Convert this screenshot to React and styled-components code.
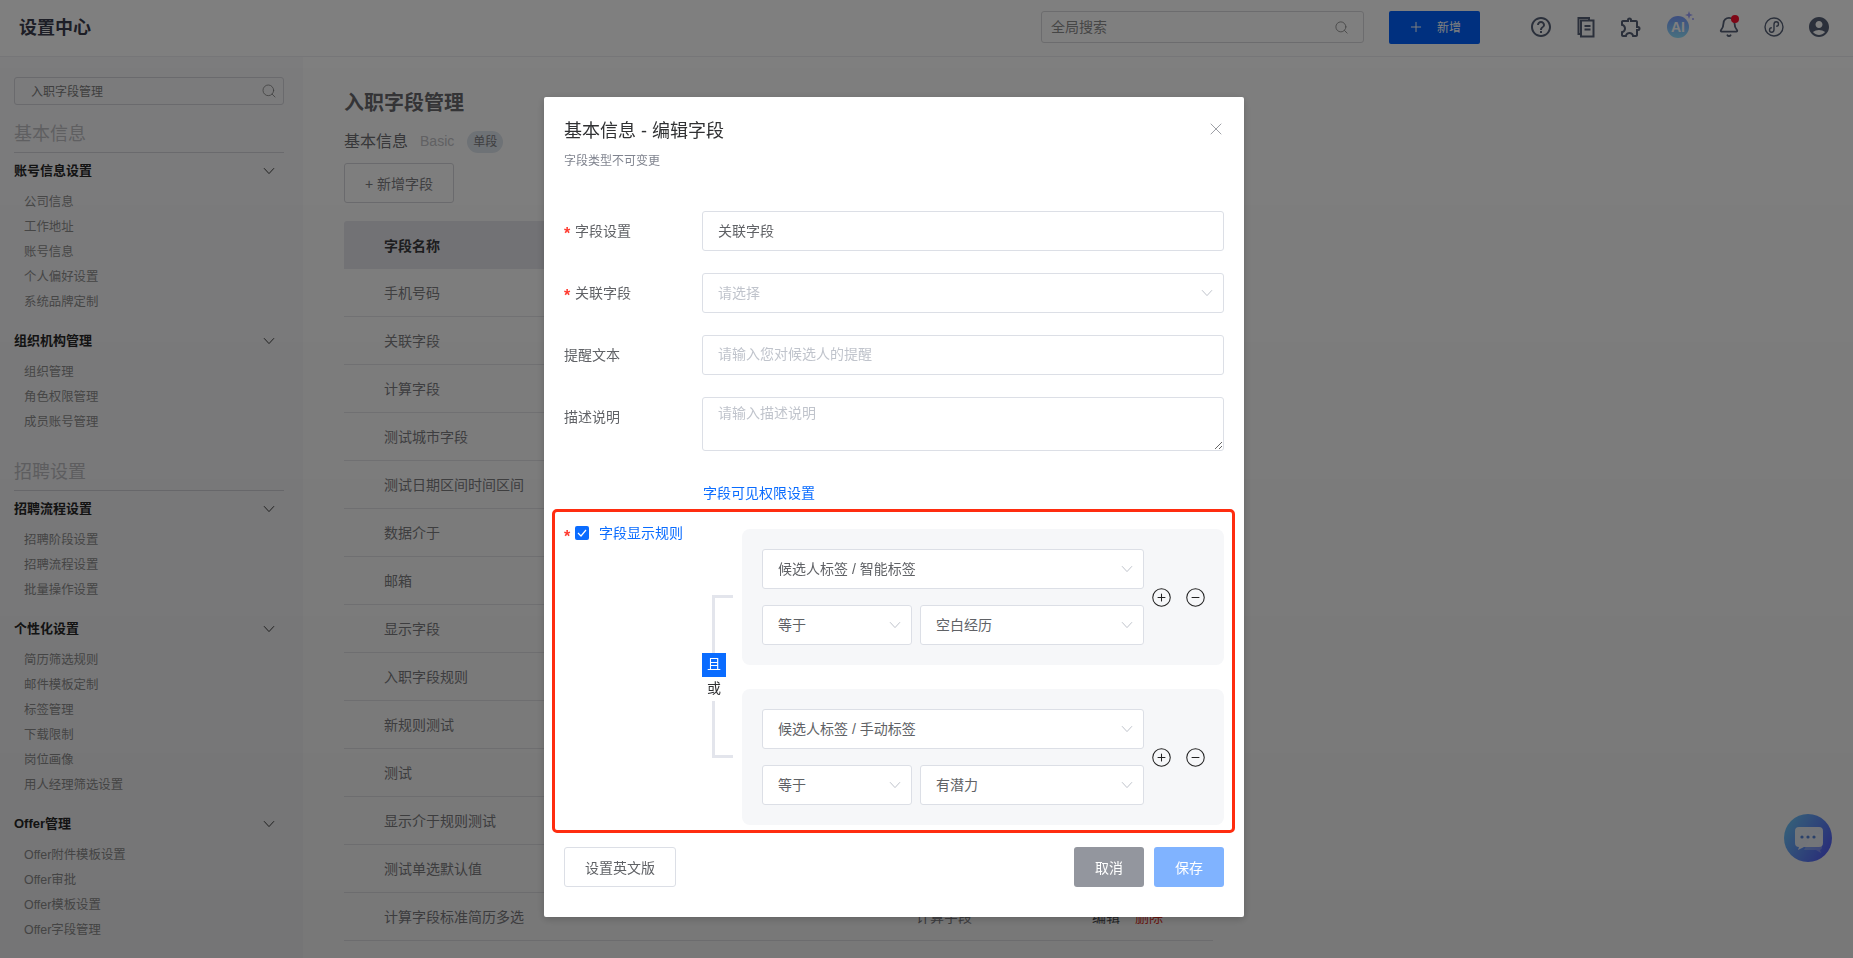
import styled, { createGlobalStyle } from "styled-components";
import { Bell, CircleMinus, CirclePlus, Search, X, Plus } from "lucide-react";
import { MdAccountCircle, MdHelpOutline, MdOutlineExtension } from "react-icons/md";

const GlobalStyle = createGlobalStyle`
    html, body {
        margin: 0;
        height: 100%;
        overflow: hidden;
    }
    * {
        box-sizing: border-box;
    }
    body, input, textarea, button {
        font-family: "Liberation Sans", "Noto Sans CJK SC", sans-serif;
    }
`

const Page = styled.div`
    display: flex;
    flex-direction: column;
    height: 100vh;
    background: #fff;
`

const TopBar = styled.header`
    display: flex;
    align-items: center;
    height: 57px;
    flex-shrink: 0;
    padding: 0 22px 2px 19px;
    border-bottom: 1px solid #ececf0;
`

const Logo = styled.div`
    flex: 1;
    padding-bottom: 3px;
    font-size: 18px;
    font-weight: 700;
    color: #3a3c4c;
`

const GlobalSearch = styled.div`
    display: flex;
    align-items: center;
    justify-content: space-between;
    width: 323px;
    height: 32px;
    padding: 0 14px 3px 9px;
    border: 1px solid #d8d8dc;
    border-radius: 3px;
    font-size: 14px;
    color: #8c8c8c;

    svg {
        margin-top: 3px;
    }
`

const NewButton = styled.button`
    display: flex;
    align-items: center;
    width: 91px;
    height: 33px;
    margin: 0 49px 0 25px;
    padding: 0 0 2px 19px;
    gap: 13px;
    border: 0;
    border-radius: 2px;
    background: #0061ff;
    color: #fff;
    font-size: 12px;

    svg {
        margin-top: 2px;
    }
`

const IconBar = styled.div`
    display: flex;
    align-items: center;
    gap: 21px;
    color: #566076;
`

const IconSlot = styled.div`
    position: relative;
    display: flex;
    align-items: center;
    justify-content: center;
    width: 24px;
    height: 24px;
    margin: 0 ${p => p.$right || 0}px 0 ${p => p.$left || 0}px;

    svg {
        flex-shrink: 0;
    }
`

const RedDot = styled.span`
    position: absolute;
    top: 0;
    right: 2px;
    width: 8px;
    height: 8px;
    border-radius: 50%;
    background: #ff0f2e;
`

const Body = styled.div`
    display: flex;
    flex: 1;
    min-height: 0;
`

const Sidebar = styled.aside`
    width: 303px;
    flex-shrink: 0;
    padding: 20px 19px 0 14px;
    background: #f9f9fb;
`

const SideSearch = styled.div`
    display: flex;
    align-items: center;
    justify-content: space-between;
    height: 28px;
    padding: 0 6px 2px 16px;
    border: 1px solid #d6d6dc;
    border-radius: 3px;
    font-size: 12px;
    color: #808080;

    svg {
        margin-top: 2px;
    }
`

const SectionTitle = styled.h4`
    margin: ${p => p.$first ? "15px" : "23px"} 0 0;
    height: 33px;
    padding: 1px 0 6px;
    border-bottom: 1px solid #d6d6dc;
    font-size: 18px;
    line-height: 26px;
    font-weight: 400;
    color: #c0c0c4;
`

const MenuGroup = styled.div`
    margin-top: ${p => p.$first ? "7px" : "15px"};
`

const MenuTitle = styled.div`
    display: flex;
    align-items: center;
    justify-content: space-between;
    height: 20px;
    padding: 0 9px 2px 0;
    margin-bottom: 10px;
    font-size: 13px;
    font-weight: 700;
    color: #282828;

    svg {
        margin-top: 4px;
    }
`

const MenuItem = styled.div`
    height: 25px;
    line-height: 25px;
    padding-left: 10px;
    font-size: 12.4px;
    color: #909090;
`

const Main = styled.main`
    flex: 1;
    padding: 32px 640px 0 41px;
`

const PageTitle = styled.h2`
    margin: 0;
    font-size: 20px;
    line-height: 28px;
    font-weight: 700;
    color: #6a6a6e;
`

const SubTitleRow = styled.div`
    display: flex;
    align-items: center;
    height: 22px;
    margin-top: 14px;
`

const SubTitle = styled.span`
    font-size: 16px;
    margin-top: -5px;
    color: #707074;
`

const SubLatin = styled.span`
    margin: -2px 0 0 12px;
    font-size: 14px;
    color: #c4c4c8;
`

const Tag = styled.span`
    margin-left: 13px;
    padding: 0 6px;
    height: 22px;
    line-height: 22px;
    border-radius: 11px;
    background: #dfe6ee;
    font-size: 12px;
    color: #808084;
`

const AddFieldButton = styled.button`
    display: block;
    width: 110px;
    height: 40px;
    margin-top: 10px;
    border: 1px solid #d6d6dc;
    border-radius: 3px;
    background: transparent;
    font-size: 14px;
    color: #808084;
`

const Table = styled.div`
    margin-top: 18px;
`

const TableHead = styled.div`
    height: 48px;
    line-height: 50px;
    padding-left: 40px;
    background: #e8e8ee;
    border-radius: 3px 3px 0 0;
    font-size: 14px;
    font-weight: 700;
    color: #3c3c40;
`

const TableRow = styled.div`
    display: grid;
    grid-template-columns: 572px 176px 1fr;
    height: 48px;
    line-height: 49px;
    border-bottom: 1px solid #e6e6ea;
    font-size: 14px;
    color: #808084;
`

const NameCell = styled.div`
    padding-left: 40px;
`

const ActionCell = styled.div`
    display: flex;
    gap: 15px;
    color: #4c4c50;
`

const DeleteLink = styled.span`
    color: #e0301e;
`

const ChatBubble = styled.div`
    position: absolute;
    top: 814px;
    right: 21px;
    width: 48px;
    height: 48px;
    border-radius: 50%;
    background: linear-gradient(120deg, #74d6ff, #5454ff);
`

const Overlay = styled.div`
    position: fixed;
    inset: 0;
    background: linear-gradient(rgba(0, 0, 0, 0.5), rgba(0, 0, 0, 0.53));
`

const Modal = styled.div`
    position: absolute;
    top: 97px;
    left: 544px;
    width: 700px;
    height: 820px;
    padding: 20px 20px 0;
    background: #fff;
    border-radius: 2px;
    box-shadow: 0 2px 8px rgba(0, 0, 0, 0.2);
`

const ModalHead = styled.div`
    display: flex;
    align-items: center;
    justify-content: space-between;
    height: 24px;
    color: #8a8d94;

    svg {
        margin-right: -2px;
    }
`

const ModalTitle = styled.h3`
    margin: 0;
    font-size: 18px;
    font-weight: 400;
    color: #303133;
`

const ModalHint = styled.div`
    margin: 12px 0 42px;
    font-size: 12px;
    line-height: 16px;
    color: #80848f;
`

const FormRow = styled.div`
    display: flex;
    margin-bottom: ${p => p.$last ? 0 : 22}px;
`

const FormLabel = styled.label`
    display: flex;
    align-items: center;
    align-self: ${p => p.$top ? "flex-start" : "center"};
    width: 138px;
    flex-shrink: 0;
    height: 40px;
    padding-bottom: 2px;
    font-size: 14px;
    color: #606266;
`

const Star = styled.span`
    width: 11px;
    height: 14px;
    flex-shrink: 0;
    padding-top: 2px;
    color: #ff3b30;
    font-size: 16px;
    line-height: 18px;
    font-weight: 700;
`

const TextInput = styled.input`
    flex: 1;
    height: 40px;
    padding: 0 15px 2px;
    border: 1px solid #dcdfe6;
    border-radius: 3px;
    outline: 0;
    font-size: 14px;
    color: #606266;

    &::placeholder {
        color: #c0c4cc;
    }
`

const TextArea = styled.textarea`
    display: block;
    flex: 1;
    height: 54px;
    padding: 5px 15px;
    border: 1px solid #dcdfe6;
    border-radius: 3px;
    outline: 0;
    font-size: 14px;
    line-height: 20px;
    color: #606266;

    &::placeholder {
        color: #c0c4cc;
    }
`

const VisibilityLink = styled.div`
    margin: 32px 0 6px 139px;
    font-size: 14px;
    line-height: 20px;
    color: #0a6cff;
`

const RuleBox = styled.section`
    display: flex;
    height: 324px;
    margin: 0 -11px 14px -12px;
    padding: 14px 8px 0 9px;
    border: 3px solid #ff2d10;
    border-radius: 5px;
`

const RuleLabel = styled.div`
    display: flex;
    align-items: center;
    width: 138px;
    flex-shrink: 0;
    height: 14px;
    font-size: 14px;
    color: #0a6cff;
`

const RuleText = styled.span`
    margin-top: -2px;
`

const CheckBox = styled.span`
    display: flex;
    align-items: center;
    justify-content: center;
    width: 14px;
    height: 14px;
    margin-right: 10px;
    border-radius: 2px;
    background: #0a6cff;
`

const Connector = styled.div`
    display: flex;
    flex-direction: column;
    align-items: flex-start;
    width: 32px;
    height: 296px;
    margin: 3px 8px 0 0;
    padding-top: 66px;
`

const Bracket = styled.div`
    width: 21px;
    height: ${p => p.$height}px;
    margin-left: 10px;
    border-left: 3px solid #e3e5ec;
    border-top: ${p => p.$side === "top" ? "3px solid #e3e5ec" : "0"};
    border-bottom: ${p => p.$side === "bottom" ? "3px solid #e3e5ec" : "0"};
`

const ToggleOption = styled.div`
    width: 24px;
    height: 24px;
    line-height: 23px;
    text-align: center;
    font-size: 14px;
    background: ${p => p.$active ? "#0a6cff" : "transparent"};
    color: ${p => p.$active ? "#fff" : "#303133"};
`

const Groups = styled.div`
    display: flex;
    flex-direction: column;
    gap: 24px;
    width: 482px;
    margin-top: 3px;
`

const ConditionCard = styled.div`
    display: flex;
    align-items: center;
    height: 136px;
    padding-left: 20px;
    border-radius: 8px;
    background: #f6f7f9;
`

const ConditionFields = styled.div`
    display: flex;
    flex-direction: column;
    gap: 16px;
    flex: 0 0 382px;
`

const FieldLine = styled.div`
    display: flex;
    gap: 8px;
`

const SelectBox = styled.div`
    display: flex;
    align-items: center;
    justify-content: space-between;
    flex: ${p => p.$width ? `0 0 ${p.$width}px` : 1};
    height: 40px;
    padding: 0 10px 2px 15px;
    border: 1px solid #dcdfe6;
    border-radius: 3px;
    background: #fff;
    font-size: 14px;
    color: ${p => p.$placeholder ? "#c0c4cc" : "#606266"};

    svg {
        margin-top: 2px;
    }
`

const CardActions = styled.div`
    display: flex;
    gap: 13px;
    margin-left: 7px;
    color: #222;
`

const ModalFooter = styled.div`
    display: flex;
    justify-content: space-between;
`

const FooterRight = styled.div`
    display: flex;
    gap: 10px;
`

const GhostButton = styled.button`
    width: 112px;
    height: 40px;
    padding-bottom: 2px;
    border: 1px solid #dcdfe6;
    border-radius: 3px;
    background: #fff;
    font-size: 14px;
    color: #606266;
`

const FilledButton = styled.button`
    width: 70px;
    height: 40px;
    padding-bottom: 2px;
    border: 0;
    border-radius: 3px;
    background: ${p => p.$color};
    font-size: 14px;
    color: #fff;
`

function Chevron({ color = "#c0c4cc" }) {
    return (
        <svg width="12" height="8" viewBox="0 0 12 8" fill="none">
            <path d="M1 1.2 6 6.6l5-5.4" stroke={color} strokeWidth="1" />
        </svg>
    )
}

function DocsIcon() {
    return (
        <svg width="20" height="22" viewBox="0 0 20 22" fill="none" stroke="currentColor" strokeWidth="2">
            <path d="M4 18H2.5V2H13v2" />
            <rect x="5" y="4.5" width="12.5" height="16" />
            <path d="M8.5 10h6M8.5 13.5h6" />
        </svg>
    )
}

function AiIcon() {
    return (
        <svg width="32" height="32" viewBox="0 0 32 32">
            <defs>
                <linearGradient id="aiFill" x1="0" y1="0" x2="0" y2="1">
                    <stop offset="0" stopColor="#7a9cff" />
                    <stop offset="1" stopColor="#90e0ff" />
                </linearGradient>
            </defs>
            <circle cx="16" cy="16" r="11" fill="url(#aiFill)" />
            <text x="16" y="21" textAnchor="middle" fontSize="14" fontWeight="700" fill="#fff" fontFamily="Liberation Sans">AI</text>
            <path d="M27 0l1 3 3 1-3 1-1 3-1-3-3-1 3-1z" fill="#9aa0ff" />
            <circle cx="31" cy="8" r="1" fill="#9aa0ff" />
        </svg>
    )
}

function LinkIcon() {
    return (
        <svg width="20" height="20" viewBox="0 0 20 20" fill="none" stroke="currentColor" strokeWidth="1.4">
            <circle cx="10" cy="10" r="9" />
            <path d="M10 7.5c0-1.7 1.1-2.7 2.3-2.7s2.2 1 2.2 2.2-1 2.2-2.3 2.2M10 12.5c0 1.7-1.1 2.7-2.3 2.7s-2.2-1-2.2-2.2 1-2.2 2.3-2.2M10 7.5v5" />
        </svg>
    )
}

function ChatIcon() {
    return (
        <svg width="48" height="48" viewBox="0 0 48 48">
            <path d="M28 20h6a4 4 0 0 1 4 4v9a3 3 0 0 1-2 3l1 3-5-3H20z" fill="#fff" opacity="0.25" />
            <path d="M15 13h20a4 4 0 0 1 4 4v12a4 4 0 0 1-4 4H20l-6 3 1-3a4 4 0 0 1-4-4V17a4 4 0 0 1 4-4z" fill="#fff" opacity="0.9" />
            <circle cx="18" cy="23" r="1.6" fill="#5a8ae0" />
            <circle cx="24" cy="23" r="1.6" fill="#5a8ae0" />
            <circle cx="30" cy="23" r="1.6" fill="#5a8ae0" />
        </svg>
    )
}

const sideMenu = [
    {
        title: "基本信息",
        groups: [
            { name: "账号信息设置", items: ["公司信息", "工作地址", "账号信息", "个人偏好设置", "系统品牌定制"] },
            { name: "组织机构管理", items: ["组织管理", "角色权限管理", "成员账号管理"] },
        ],
    },
    {
        title: "招聘设置",
        groups: [
            { name: "招聘流程设置", items: ["招聘阶段设置", "招聘流程设置", "批量操作设置"] },
            { name: "个性化设置", items: ["简历筛选规则", "邮件模板定制", "标签管理", "下载限制", "岗位画像", "用人经理筛选设置"] },
            { name: "Offer管理", items: ["Offer附件模板设置", "Offer审批", "Offer模板设置", "Offer字段管理"] },
        ],
    },
]

// only the last row sticks out under the dialog, the others stay name only
const fieldRows = [
    { name: "手机号码" },
    { name: "关联字段" },
    { name: "计算字段" },
    { name: "测试城市字段" },
    { name: "测试日期区间时间区间" },
    { name: "数据介于" },
    { name: "邮箱" },
    { name: "显示字段" },
    { name: "入职字段规则" },
    { name: "新规则测试" },
    { name: "测试" },
    { name: "显示介于规则测试" },
    { name: "测试单选默认值" },
    { name: "计算字段标准简历多选", type: "计算字段" },
]

const conditions = [
    { source: "候选人标签 / 智能标签", value: "空白经历" },
    { source: "候选人标签 / 手动标签", value: "有潜力" },
]

function App() {
    return (
        <Page>
            <GlobalStyle />
            <TopBar>
                <Logo>设置中心</Logo>
                <GlobalSearch>
                    全局搜索
                    <Search size={15} strokeWidth={1.4} />
                </GlobalSearch>
                <NewButton>
                    <Plus size={16} strokeWidth={1.5} />
                    新增
                </NewButton>
                <IconBar>
                    <IconSlot><MdHelpOutline size={24} /></IconSlot>
                    <IconSlot><DocsIcon /></IconSlot>
                    <IconSlot><MdOutlineExtension size={24} /></IconSlot>
                    <IconSlot $left={2} $right={6}><AiIcon /></IconSlot>
                    <IconSlot>
                        <Bell size={22} strokeWidth={2} />
                        <RedDot />
                    </IconSlot>
                    <IconSlot><LinkIcon /></IconSlot>
                    <IconSlot><MdAccountCircle size={24} /></IconSlot>
                </IconBar>
            </TopBar>

            <Body>
                <Sidebar>
                    <SideSearch>
                        入职字段管理
                        <Search size={16} strokeWidth={1.2} />
                    </SideSearch>
                    {sideMenu.map((section, s) => (
                        <div key={section.title}>
                            <SectionTitle $first={s === 0}>{section.title}</SectionTitle>
                            {section.groups.map((group, g) => (
                                <MenuGroup key={group.name} $first={g === 0}>
                                    <MenuTitle>
                                        {group.name}
                                        <Chevron color="#444" />
                                    </MenuTitle>
                                    {group.items.map(item => <MenuItem key={item}>{item}</MenuItem>)}
                                </MenuGroup>
                            ))}
                        </div>
                    ))}
                </Sidebar>

                <Main>
                    <PageTitle>入职字段管理</PageTitle>
                    <SubTitleRow>
                        <SubTitle>基本信息</SubTitle>
                        <SubLatin>Basic</SubLatin>
                        <Tag>单段</Tag>
                    </SubTitleRow>
                    <AddFieldButton>+ 新增字段</AddFieldButton>
                    <Table>
                        <TableHead>字段名称</TableHead>
                        {fieldRows.map(row => (
                            <TableRow key={row.name}>
                                <NameCell>{row.name}</NameCell>
                                {row.type && <div>{row.type}</div>}
                                {row.type && (
                                    <ActionCell>
                                        编辑
                                        <DeleteLink>删除</DeleteLink>
                                    </ActionCell>
                                )}
                            </TableRow>
                        ))}
                    </Table>
                </Main>
            </Body>

            <ChatBubble><ChatIcon /></ChatBubble>

            <Overlay>
                <Modal>
                    <ModalHead>
                        <ModalTitle>基本信息 - 编辑字段</ModalTitle>
                        <X size={20} strokeWidth={1} />
                    </ModalHead>
                    <ModalHint>字段类型不可变更</ModalHint>

                    <FormRow>
                        <FormLabel><Star>*</Star>字段设置</FormLabel>
                        <TextInput defaultValue="关联字段" />
                    </FormRow>
                    <FormRow>
                        <FormLabel><Star>*</Star>关联字段</FormLabel>
                        <SelectBox $placeholder>
                            请选择
                            <Chevron />
                        </SelectBox>
                    </FormRow>
                    <FormRow>
                        <FormLabel>提醒文本</FormLabel>
                        <TextInput placeholder="请输入您对候选人的提醒" />
                    </FormRow>
                    <FormRow $last>
                        <FormLabel $top>描述说明</FormLabel>
                        <TextArea placeholder="请输入描述说明" />
                    </FormRow>

                    <VisibilityLink>字段可见权限设置</VisibilityLink>

                    <RuleBox>
                        <RuleLabel>
                            <Star>*</Star>
                            <CheckBox>
                                <svg width="10" height="8" viewBox="0 0 10 8" fill="none">
                                    <path d="M1 4l3 3 5-6" stroke="#fff" strokeWidth="1.2" />
                                </svg>
                            </CheckBox>
                            <RuleText>字段显示规则</RuleText>
                        </RuleLabel>
                        <Connector>
                            <Bracket $side="top" $height={58} />
                            <ToggleOption $active>且</ToggleOption>
                            <ToggleOption>或</ToggleOption>
                            <Bracket $side="bottom" $height={57} />
                        </Connector>
                        <Groups>
                            {conditions.map(c => (
                                <ConditionCard key={c.source}>
                                    <ConditionFields>
                                        <FieldLine>
                                            <SelectBox>
                                                {c.source}
                                                <Chevron />
                                            </SelectBox>
                                        </FieldLine>
                                        <FieldLine>
                                            <SelectBox $width={150}>
                                                等于
                                                <Chevron />
                                            </SelectBox>
                                            <SelectBox>
                                                {c.value}
                                                <Chevron />
                                            </SelectBox>
                                        </FieldLine>
                                    </ConditionFields>
                                    <CardActions>
                                        <CirclePlus size={21} strokeWidth={1.2} />
                                        <CircleMinus size={21} strokeWidth={1.2} />
                                    </CardActions>
                                </ConditionCard>
                            ))}
                        </Groups>
                    </RuleBox>

                    <ModalFooter>
                        <GhostButton>设置英文版</GhostButton>
                        <FooterRight>
                            <FilledButton $color="#93969e">取消</FilledButton>
                            <FilledButton $color="#80b3ff">保存</FilledButton>
                        </FooterRight>
                    </ModalFooter>
                </Modal>
            </Overlay>
        </Page>
    )
}

export default App;
